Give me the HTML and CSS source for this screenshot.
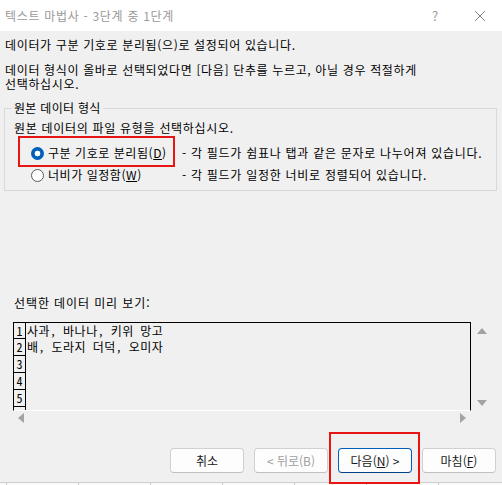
FILE: index.html
```html
<!DOCTYPE html>
<html lang="ko">
<head>
<meta charset="utf-8">
<title>텍스트 마법사</title>
<link rel="stylesheet" href="styles.css">
</head>
<body>
<div class="dialog">
  <div class="titlebar">
    <span class="title">텍스트 마법사 - 3단계 중 1단계</span>
    <span class="help">?</span>
    <span class="close"><svg width="12" height="12" viewBox="0 0 12 12"><path d="M1 1L11 11M11 1L1 11" stroke="#8a8a8a" stroke-width="1" fill="none"/></svg></span>
  </div>
  <div class="content">
    <p class="line l1">데이터가 구분 기호로 분리됨(으)로 설정되어 있습니다.</p>
    <p class="line l2">데이터 형식이 올바로 선택되었다면 [다음] 단추를 누르고, 아닐 경우 적절하게<br>선택하십시오.</p>
    <fieldset class="group">
      <legend>원본 데이터 형식</legend>
      <p class="prompt">원본 데이터의 파일 유형을 선택하십시오.</p>
      <div class="opt">
        <span class="radio on"></span>
        <span class="lbl">구분 기호로 분리됨(<u>D</u>)</span>
        <span class="desc">- 각 필드가 쉼표나 탭과 같은 문자로 나누어져 있습니다.</span>
      </div>
      <div class="opt">
        <span class="radio"></span>
        <span class="lbl">너비가 일정함(<u>W</u>)</span>
        <span class="desc">- 각 필드가 일정한 너비로 정렬되어 있습니다.</span>
      </div>
    </fieldset>
    <p class="preview-label">선택한 데이터 미리 보기:</p>
    <div class="preview-wrap">
      <div class="preview-row">
        <div class="preview">
          <div class="prow"><span class="num">1</span><span class="ptext">사과, 바나나, 키위 망고</span></div>
          <div class="prow"><span class="num">2</span><span class="ptext">배, 도라지 더덕, 오미자</span></div>
          <div class="prow"><span class="num">3</span><span class="ptext"></span></div>
          <div class="prow"><span class="num">4</span><span class="ptext"></span></div>
          <div class="prow"><span class="num">5</span><span class="ptext"></span></div>
          <div class="prow"><span class="num"></span><span class="ptext"></span></div>
        </div>
        <div class="vscroll">
          <svg width="10" height="6" viewBox="0 0 10 6"><path d="M0 6L5 0L10 6Z" fill="#a3a3a3"/></svg>
          <svg width="10" height="6" viewBox="0 0 10 6"><path d="M0 0L5 6L10 0Z" fill="#a3a3a3"/></svg>
        </div>
      </div>
      <div class="hscroll">
        <svg width="6" height="10" viewBox="0 0 6 10"><path d="M6 0L0 5L6 10Z" fill="#a3a3a3"/></svg>
        <svg width="6" height="10" viewBox="0 0 6 10"><path d="M0 0L6 5L0 10Z" fill="#a3a3a3"/></svg>
      </div>
    </div>
  </div>
  <div class="buttons">
    <button class="btn">취소</button>
    <button class="btn disabled">&lt; 뒤로(B)</button>
    <button class="btn primary">다음(<u>N</u>) &gt;</button>
    <button class="btn">마침(<u>F</u>)</button>
  </div>
  <div class="sheet-edge"></div>
</div>
<div class="mark mark1"></div>
<div class="mark mark2"></div>
</body>
</html>
```
FILE: styles.css
```css
* { box-sizing: border-box; }
html, body { margin: 0; padding: 0; }
body {
  width: 502px;
  height: 485px;
  overflow: hidden;
  background: #f0f0f0;
  font-family: "Noto Sans CJK KR", "Noto Sans", sans-serif;
  font-size: 12px;
  color: #000;
  position: relative;
}
.dialog { width: 502px; height: 485px; display: flex; flex-direction: column; }
.titlebar {
  height: 31px;
  background: #fff;
  display: flex;
  align-items: center;
  padding-left: 5px;
  color: #9a9a9a;
  font-size: 12px;
  line-height: 14px;
}
.title { flex: 1; letter-spacing: 0.7px; }
.help { width: 10px; text-align: center; margin-right: 34px; font-size: 13px; color: #9a9a9a; }
.close { width: 12px; height: 12px; margin-right: 16px; display: flex; }
.content { padding-top: 7px; }
.line { margin: 0; line-height: 14px; padding-left: 5px; letter-spacing: 0.65px; }
.l2 { margin-top: 11px; }
.group {
  margin: 10px 5px 0 4px;
  padding: 0 0 4px 9px;
  border: 1px solid #d9d9d9;
  min-width: 0;
}
.group legend {
  padding: 0 2px;
  margin-left: -2px;
  line-height: 14px;
  letter-spacing: 0.3px;
}
.prompt { margin: 6px 0 7px 0; line-height: 14px; letter-spacing: 0.7px; }
.opt { display: flex; align-items: center; height: 22px; line-height: 14px; }
.radio {
  width: 13px;
  height: 13px;
  border-radius: 50%;
  margin-left: 17px;
  border: 1px solid #5a5a5a;
  background: #fff;
  flex: none;
}
.radio.on {
  border: none;
  background: radial-gradient(circle, #fff 0 2.6px, #005fb8 3.2px);
}
.lbl { margin-left: 4px; width: 134px; flex: none; letter-spacing: 0.55px; white-space: nowrap; }
.desc { white-space: nowrap; letter-spacing: 0.72px; }
.preview-label { margin: 105px 0 0 0; padding-left: 14px; line-height: 14px; letter-spacing: 0.9px; }
.preview-wrap { margin: 12px 0 0 13px; }
.preview-row { display: flex; }
.preview {
  width: 458px;
  height: 89px;
  border: 1px solid #000;
  border-bottom: 1px solid #fff;
  overflow: hidden;
}
.prow { display: flex; height: 17px; }
.prow:first-child { height: 16px; }
.num {
  width: 12px;
  flex: none;
  border-right: 1px solid #000;
  border-bottom: 1px solid #000;
  text-align: center;
  line-height: 16px;
  font-family: "Noto Sans Mono CJK KR", "DejaVu Sans Mono", monospace;
  font-size: 12px;
}
.ptext {
  padding-left: 1px;
  line-height: 16px;
  font-family: "Noto Sans Mono CJK KR", "Noto Sans CJK KR", monospace;
  font-size: 12px;
  letter-spacing: 0.5px;
  white-space: pre;
}
.vscroll {
  width: 20px;
  display: flex;
  flex-direction: column;
  justify-content: space-between;
  align-items: center;
  padding: 6px 0 5px 1px;
}
.hscroll {
  width: 458px;
  height: 13px;
  display: flex;
  justify-content: space-between;
  align-items: center;
  padding: 0 5px 0 5px;
}
.buttons {
  margin-top: 24px;
  display: flex;
  justify-content: flex-end;
  gap: 10px;
  padding-right: 6px;
}
.btn {
  width: 74px;
  height: 25px;
  background: #fdfdfd;
  border: 1px solid #d0d0d0;
  border-bottom-color: #c0c0c0;
  border-radius: 4px;
  font-family: "Noto Sans CJK KR", "Noto Sans", sans-serif;
  font-size: 12px;
  color: #1a1a1a;
  padding: 0;
  line-height: 14px;
}
.btn.disabled { color: #a0a0a0; }
.btn.primary { border-color: #005fb8; border-bottom-color: #00428a; }
.sheet-edge {
  margin-top: auto;
  height: 3px;
  border-top: 1px solid #d0d0d0;
  background: repeating-linear-gradient(90deg, transparent 0 6px, #c8c8c8 6px 7px, transparent 7px 72px) #fafafa;
}
.mark { position: absolute; border: 2px solid #e81515; }
.mark1 { left: 18px; top: 136px; width: 157px; height: 31px; }
.mark2 { left: 329px; top: 432px; width: 91px; height: 52px; }
```
